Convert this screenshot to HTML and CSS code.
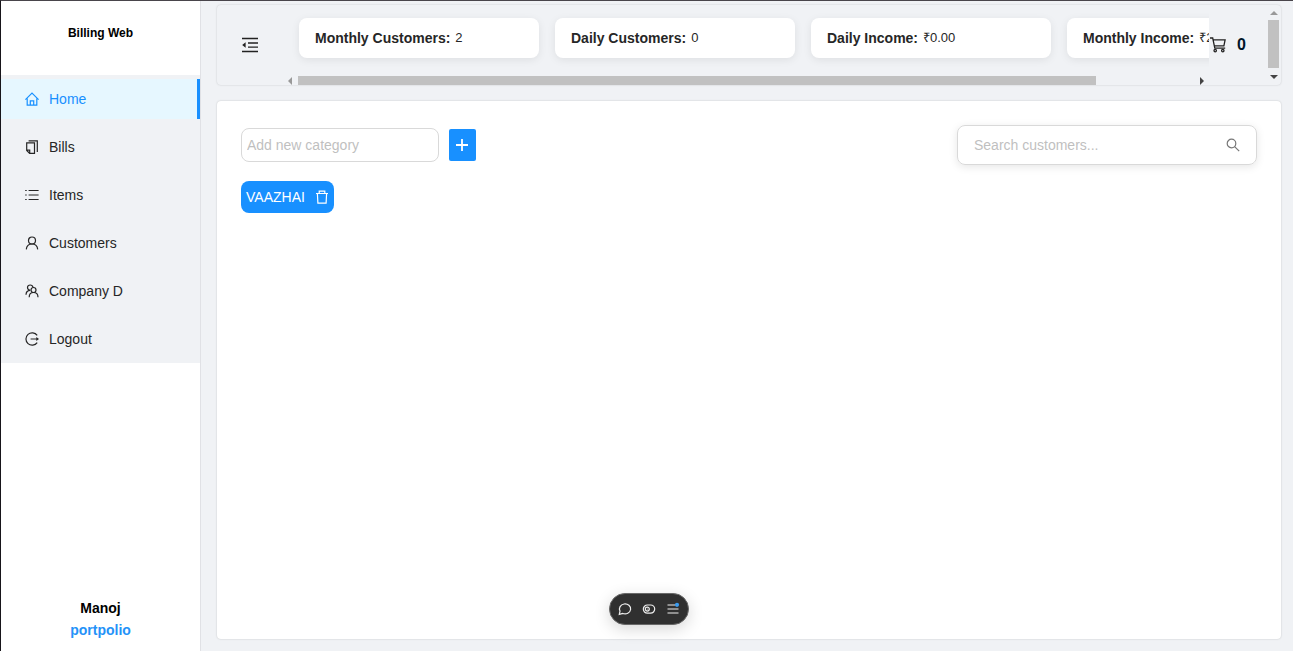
FILE: index.html
```html
<!DOCTYPE html>
<html lang="en">
<head>
<meta charset="utf-8">
<title>Billing Web</title>
<link rel="stylesheet" href="styles.css">
</head>
<body>
<div class="app">
  <aside class="sidebar">
    <h1 class="brand">Billing Web</h1>
    <nav class="menu">
      <a class="menu-item active"><svg class="icon" viewBox="0 0 14 14"><path d="M.4 7.700 7 1.100l6.600 6.600M2.200 6.500v6.600h9.600V6.500M5.300 12.900V8.900h3.400v4"/></svg>Home</a>
      <a class="menu-item"><svg class="icon" viewBox="0 0 14 14"><path d="M1.700 2.900h7.800v10.500H4.600L1.700 10.500zM1.700 10.200h3v3M3.600.8h8.700v11.200"/></svg>Bills</a>
      <a class="menu-item"><svg class="icon" viewBox="0 0 14 14"><path d="M3.600 2.500h10M3.600 7h10M3.600 11.500h10M.2 2.500h1.500M.2 7h1.500M.2 11.500h1.500"/></svg>Items</a>
      <a class="menu-item"><svg class="icon" viewBox="0 0 14 14"><circle cx="7" cy="4.500" r="3.500"/><path d="M1.300 13.400C1.600 10.200 3.900 8 7 8s5.400 2.200 5.700 5.400"/></svg>Customers</a>
      <a class="menu-item"><svg class="icon" viewBox="0 0 14 14"><circle cx="8.500" cy="6" r="2.500"/><path d="M4.200 13.300c0-2.900 1.700-4.800 4.300-4.800s4.500 1.900 4.500 4.800M8 3.400C7.700 1.900 6.600 1 5.200 1 3.600 1 2.500 2.100 2.500 3.600S3.700 6.200 5.200 6.300M1 10.700c.1-2.500 1.600-4.300 4.200-4.400"/></svg>Company D</a>
      <a class="menu-item"><svg class="icon" viewBox="0 0 14 14"><path d="M12.200 3.400a6.200 6.200 0 1 0 0 7.200M5.600 7h6.700"/><path class="solid" d="m11.300 4.900 2.700 2.100-2.700 2.100z"/></svg>Logout</a>
    </nav>
    <footer class="credit"><span>Manoj</span><a class="credit-link">portpolio</a></footer>
  </aside>
  <div class="main">
    <header class="topbar">
      <svg class="fold" viewBox="0 0 16 16"><path d="M0 1.500h16M6 5.900h10M6 10.100h10M0 14.500h16"/><path class="solid" d="M3.600 5.300v5.400L.2 8z"/></svg>
      <div class="stats">
        <div class="cards">
          <div class="card"><b>Monthly Customers:</b><span>2</span></div>
          <div class="card"><b>Daily Customers:</b><span>0</span></div>
          <div class="card"><b>Daily Income:</b><span>₹0.00</span></div>
          <div class="card"><b>Monthly Income:</b><span>₹2</span></div>
        </div>
        <div class="hbar"><i class="arrow left"></i><i class="hthumb"></i><i class="arrow right"></i></div>
      </div>
      <div class="cart"><svg class="cart-icon" viewBox="0 0 16 16"><path d="M0 1h2.700l2.100 10.100h10.400M3.100 2.900h12L13.900 8.900H4.600"/><circle cx="5.200" cy="13.600" r="1.200"/><circle cx="12.800" cy="13.600" r="1.200"/></svg><span>0</span></div>
      <div class="vbar"><i class="arrow up"></i><i class="vthumb"></i><i class="arrow down"></i></div>
    </header>
    <main class="content">
      <div class="tools">
        <input class="category" placeholder="Add new category">
        <button class="add"><svg class="plus" viewBox="0 0 14 14"><path d="M7 1v12M1 7h12"/></svg></button>
        <div class="search"><span>Search customers...</span><svg class="icon" viewBox="0 0 14 14"><circle cx="5.500" cy="5.500" r="4.300"/><path d="m8.600 8.600 4.600 4.600"/></svg></div>
      </div>
      <div class="tag">VAAZHAI<svg class="icon" viewBox="0 0 14 14"><path d="M1 3.500h12M4.200 3.300V1.200h5.600v2.100M2.400 3.700l.5 9.400h8.200l.5-9.400"/></svg></div>
    </main>
  </div>
  <div class="dock">
    <svg class="icon" viewBox="0 0 14 14"><path d="M1.300 12.400 2 9.100A5.600 5 0 1 1 4.800 11.500z"/></svg>
    <svg class="icon" viewBox="0 0 14 14"><rect x="1.300" y="3" width="11.400" height="8.200" rx="4.100"/><circle cx="5.300" cy="7.100" r="2"/><circle class="solid" cx="5.300" cy="7.100" r=".5"/></svg>
    <svg class="icon" viewBox="0 0 14 14"><path d="M1.500 3h8M1.500 7h11M1.500 11h11"/><circle class="dot" cx="11" cy="2.800" r="2.100"/></svg>
  </div>
</div>
</body>
</html>
```
FILE: styles.css
```css
* { box-sizing: border-box; }
body { margin: 0; font: 14px/22px "Liberation Sans", Arial, sans-serif; color: #262626; }
svg { fill: none; stroke: currentColor; flex: none; display: block; }
.solid { fill: currentColor; stroke: none; }
.icon { width: 14px; height: 14px; stroke-width: 1.2; }
.app { display: flex; height: 651px; overflow: hidden; position: relative; background: #f0f2f5; border-top: 1px solid #49454b; border-left: 1px solid #17151a; }
.sidebar { width: 200px; flex: none; display: flex; flex-direction: column; background: #fff; border-right: 1px solid #e0e1e5; }
.brand { margin: 0; height: 74px; line-height: 65px; font-size: 12px; text-align: center; color: #000; }
.menu { background: #f0f2f5; padding: 4px 0; display: flex; flex-direction: column; gap: 8px; }
.menu-item { display: flex; align-items: center; height: 40px; padding-left: 24px; gap: 10px; }
.active { color: #1890ff; background: #e6f7ff; border-right: 3px solid #1890ff; }
.credit { margin-top: auto; padding-bottom: 10px; text-align: center; font-weight: bold; color: #000; display: flex; flex-direction: column; }
.credit-link { color: #2492f8; }
.main { flex: 1; min-width: 0; display: flex; flex-direction: column; gap: 16px; padding: 4px 12px 12px 16px; }
.topbar { height: 80px; display: flex; padding-left: 25px; border-radius: 4px; box-shadow: 0 0 2px rgba(0,0,0,.18); overflow: hidden; }
.fold { width: 16px; height: 16px; margin: 32px 25px 0 0; stroke-width: 1.45; color: #222; }
.stats { width: 926px; flex: none; display: flex; flex-direction: column; overflow: hidden; }
.cards { display: flex; gap: 16px; padding: 13px 0 0 16px; height: 71px; overflow: hidden; }
.card { flex: none; width: 240px; height: 40px; display: flex; align-items: center; gap: 5px; padding: 0 16px; background: #fff; border-radius: 8px; box-shadow: 0 2px 8px rgba(0,0,0,.08); }
.card span { font-size: 13px; }
.hbar { height: 9px; display: flex; align-items: center; padding: 0 5px; }
.hthumb { width: 798px; height: 9px; margin-left: 6px; background: #c1c1c1; }
.arrow { border: 4px solid transparent; width: 0; height: 0; }
.left { border-left: 0; border-right-color: #999; }
.right { border-right: 0; border-left-color: #444; margin-left: auto; }
.cart { display: flex; align-items: flex-start; gap: 11px; padding-top: 32px; font-size: 16px; line-height: 16px; font-weight: bold; color: #001529; margin-left: 1px; }
.cart-icon { width: 16px; height: 16px; stroke-width: 1.3; color: #222; }
.vbar { width: 11px; margin: 6px 2px 6px auto; display: flex; flex-direction: column; align-items: center; }
.vthumb { width: 11px; height: 48px; margin: 5px 0 7px; background: #c1c1c1; }
.up { border-top: 0; border-bottom-color: #999; }
.down { border-bottom: 0; border-top-color: #444; }
.content { flex: 1; padding: 24px; background: #fff; border-radius: 4px; box-shadow: 0 0 2px rgba(0,0,0,.2); }
.tools { display: flex; align-items: center; height: 40px; }
.category { width: 198px; height: 34px; padding: 0 5px; border: 1px solid #d9d9d9; border-radius: 8px; font: inherit; background: #fff; }
.category::placeholder { color: #bfbfbf; opacity: 1; }
.add { width: 27px; height: 32px; margin-left: 10px; padding: 0 1px 0 0; display: grid; place-items: center; color: #fff; background: #1890ff; border: 0; border-radius: 2px; }
.plus { width: 14px; height: 14px; stroke-width: 1.8; }
.search { width: 300px; height: 40px; margin-left: auto; padding: 0 16px; display: flex; align-items: center; justify-content: space-between; color: #bfbfbf; border: 1px solid #d9d9d9; border-radius: 8px; box-shadow: 0 2px 8px rgba(0,0,0,.1); }
.search .icon { color: #777; }
.tag { width: 93px; height: 32px; margin-top: 16px; padding: 0 5px; display: flex; align-items: center; justify-content: space-between; color: #fff; background: #1890ff; border-radius: 8px; }
.dock { position: absolute; left: 608px; top: 592px; width: 80px; height: 32px; display: flex; align-items: center; justify-content: center; gap: 10px; color: #eee; background: #303030; border: 1px solid #686868; border-radius: 16px; box-shadow: 0 4px 16px rgba(0,0,0,.16); }
.dot { fill: #3b9cf0; stroke: none; }
```
